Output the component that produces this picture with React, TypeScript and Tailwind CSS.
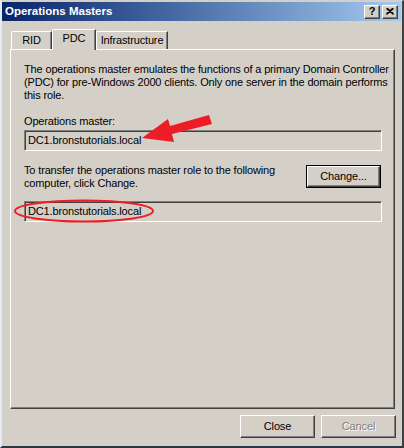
import React from 'react';

const font = { fontFamily: '"Liberation Sans", Arial, sans-serif' };

function RaisedButton({ label, disabled, isDefault }: { label: string; disabled?: boolean; isDefault?: boolean }) {
  const inner = (
    <div className="flex h-full w-full items-center justify-center border-t border-l border-t-white border-l-white border-r border-b border-r-[#404040] border-b-[#404040] shadow-[inset_-1px_-1px_#808080]">
      <span className={disabled ? 'text-[#808080] [text-shadow:1px_1px_#ffffff]' : 'text-black'}>{label}</span>
    </div>
  );
  if (isDefault) {
    return <div className="h-[23px] w-[75px] border border-black">{inner}</div>;
  }
  return <div className="h-[23px] w-[75px]">{inner}</div>;
}

function ReadOnlyBox({ value }: { value: string }) {
  return (
    <div className="flex h-[21px] w-full items-center border-t border-l border-t-[#808080] border-l-[#808080] border-r border-b border-r-white border-b-white pl-[2px] shadow-[inset_1px_1px_#404040]">
      <span className="pl-px">{value}</span>
    </div>
  );
}

function Tab({ label, selected, width }: { label: string; selected?: boolean; width: string }) {
  if (selected) {
    return (
      <div className={`relative z-10 -mb-px flex h-[21px] ${width} justify-center rounded-tl-[2px] border-t border-l border-t-white border-l-white border-r border-r-[#404040] bg-[#d4d0c8] pt-[2px] shadow-[inset_-1px_0_#808080]`}>
        <span>{label}</span>
      </div>
    );
  }
  return (
    <div className={`flex h-[18px] ${width} justify-center rounded-tl-[2px] border-t border-l border-t-white border-l-white border-r border-r-[#404040] pt-[2px] shadow-[inset_-1px_0_#808080]`}>
      <span>{label}</span>
    </div>
  );
}

export default function App() {
  return (
    <div
      className="relative flex h-[448px] w-[404px] flex-col overflow-hidden border-t border-t-[#d4d0c8] border-l-2 border-l-[#e4ebf2] border-r-2 border-r-[#404040] border-b-2 border-b-[#2c3848] bg-[#d4d0c8] text-[11px] leading-[13px] tracking-[-0.15px] text-black"
      style={font}
    >
      {/* title bar */}
      <div className="mt-px mr-px flex h-[19px] items-center justify-between bg-gradient-to-r from-[#0a246a] to-[#a6caf0] pl-[3px] pr-[3px]">
        <span className="text-[11.5px] font-bold tracking-normal text-white">Operations Masters</span>
        <div className="flex gap-[2px]">
          <div className="flex h-[14px] w-[16px] items-center justify-center border-t border-l border-t-white border-l-white border-r border-b border-r-[#404040] border-b-[#404040] bg-[#d4d0c8] text-[11px] font-bold leading-none shadow-[inset_-1px_-1px_#808080]">
            ?
          </div>
          <div className="flex h-[14px] w-[16px] items-center justify-center border-t border-l border-t-white border-l-white border-r border-b border-r-[#404040] border-b-[#404040] bg-[#d4d0c8] shadow-[inset_-1px_-1px_#808080]">
            <svg width="8" height="7" viewBox="0 0 8 7">
              <path d="M0.5 0.5 L7.5 6.5 M1.5 0.5 L7.5 5.7 M7.5 0.5 L0.5 6.5 M6.5 0.5 L0.5 5.7" stroke="#000" strokeWidth="1.2" fill="none" />
            </svg>
          </div>
        </div>
      </div>

      {/* tabs */}
      <div className="mt-[7px] ml-[9px] flex h-[21px] items-end">
        <Tab label="RID" width="w-[41px]" />
        <Tab label="PDC" width="w-[44px]" selected />
        <Tab label="Infrastructure" width="w-[72px]" />
      </div>

      {/* panel */}
      <div className="ml-[8px] flex h-[360px] w-[385px] flex-col border-t border-l border-t-white border-l-white border-r border-b border-r-[#404040] border-b-[#404040] pt-[13px] pl-[13px] pr-[12px] shadow-[inset_-1px_-1px_#808080]">
        <p className="whitespace-nowrap">
          The operations master emulates the functions of a primary Domain Controller
          <br />
          (PDC) for pre-Windows 2000 clients. Only one server in the domain performs
          <br />
          this role.
        </p>
        <p className="mt-[13px]">Operations master:</p>
        <div className="mt-[2px]">
          <ReadOnlyBox value="DC1.bronstutorials.local" />
        </div>
        <div className="mt-[13px] flex justify-between">
          <p className="whitespace-nowrap">
            To transfer the operations master role to the following
            <br />
            computer, click Change.
          </p>
          <div className="mt-px mr-[1px]">
            <RaisedButton label="Change..." isDefault />
          </div>
        </div>
        <div className="mt-[11px]">
          <ReadOnlyBox value="DC1.bronstutorials.local" />
        </div>
      </div>

      {/* buttons */}
      <div className="mt-[6px] flex justify-end gap-[6px] pr-[6px]">
        <RaisedButton label="Close" />
        <RaisedButton label="Cancel" disabled />
      </div>

      {/* annotations */}
      <svg className="pointer-events-none absolute left-[-2px] top-[-1px]" width="404" height="448" viewBox="0 0 404 448">
        <polygon
          points="142,138 168,119 170,126 209,115 212,124 172,134 174,142"
          fill="#ee1c24"
        />
        <ellipse cx="84" cy="211" rx="69" ry="10.5" fill="none" stroke="#ee1c24" strokeWidth="2" />
      </svg>
    </div>
  );
}
